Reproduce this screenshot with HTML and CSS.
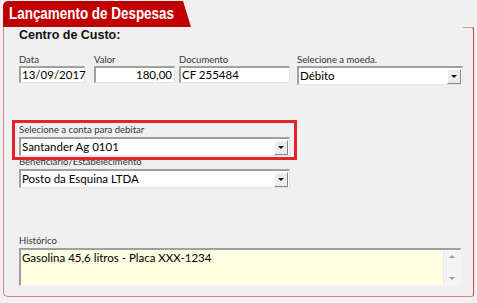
FILE: index.html
```html
<!DOCTYPE html>
<html lang="pt-BR">
<head>
  <meta charset="UTF-8" />
  <title>Lançamento de Despesas</title>
  <link rel="stylesheet" href="styles.css">
</head>
<body>
  <div class="tab"><span class="tab-title">Lançamento de Despesas</span></div>

  <div class="frame">
    <h2 class="section-title">Centro de Custo:</h2>

    <div class="row row-top">
      <div class="field f-data">
        <label>Data</label>
        <div class="input">13/09/2017</div>
      </div>
      <div class="field f-valor">
        <label>Valor</label>
        <div class="input num">180,00</div>
      </div>
      <div class="field f-doc">
        <label>Documento</label>
        <div class="input">CF 255484</div>
      </div>
      <div class="field f-moeda">
        <label>Selecione a moeda.</label>
        <div class="select">
          <span>Débito</span>
          <span class="drop"><i></i></span>
        </div>
      </div>
    </div>

    <div class="highlight">
      <div class="field">
        <label>Selecione a conta para debitar</label>
        <div class="select">
          <span>Santander Ag 0101</span>
          <span class="drop"><i></i></span>
        </div>
      </div>
    </div>

    <div class="field f-benef">
      <label>Beneficiário/Estabelecimento</label>
      <div class="select">
        <span>Posto da Esquina LTDA</span>
        <span class="drop"><i></i></span>
      </div>
    </div>

    <div class="field f-hist">
      <label>Histórico</label>
      <div class="memo">
        <span class="memo-text">Gasolina 45,6 litros - Placa XXX-1234</span>
        <span class="scroll">
          <i class="up"></i>
          <i class="down"></i>
        </span>
      </div>
    </div>
  </div>
</body>
</html>
```

FILE: styles.css
```css
body {
  margin: 0;
  background-color: #f0f0f0;
  font-family: Lato, "Noto Sans", sans-serif;
  color: #222;
  width: 477px;
  height: 303px;
  overflow: hidden;
}

.tab {
  margin: 1px 0 0 3px;
  width: 188px;
  height: 26px;
  box-sizing: border-box;
  padding: 2px 0 0 6px;
  background-color: #c00000;
  color: white;
  font-family: "Liberation Sans", Arial, sans-serif;
  font-weight: bold;
  font-size: 17px;
  line-height: 22px;
  border-top-left-radius: 5px;
  clip-path: polygon(0 0, 180px 0, 188px 100%, 0 100%);
  white-space: nowrap;
  overflow: hidden;
}

.tab-title {
  display: inline-block;
  transform: scaleX(0.79);
  transform-origin: left center;
}

.frame {
  position: relative;
  margin-left: 3px;
  width: 471px;
  height: 270px;
  box-sizing: border-box;
  border-left: 1px solid #e08080;
  border-right: 1px solid #c84848;
  border-bottom: 1px solid #e08080;
  border-bottom-left-radius: 5px;
  border-bottom-right-radius: 3px;
  padding: 0 0 0 15px;
}

.frame::before {
  content: "";
  position: absolute;
  top: 0;
  right: -1px;
  width: 10px;
  height: 4px;
  border-top: 1px solid #e89090;
  border-right: 1px solid #c84848;
  border-top-right-radius: 3px;
}

.section-title {
  margin: 0;
  padding-top: 1px;
  font-family: "Liberation Sans", Arial, sans-serif;
  font-size: 12.5px;
  font-weight: bold;
  color: #111;
  line-height: 14px;
}

.field label {
  display: block;
  font-size: 9.5px;
  color: #333;
  line-height: 13px;
  height: 13px;
  white-space: nowrap;
}

.row {
  display: flex;
}

.row-top {
  margin-top: 11px;
  gap: 4px;
}

.input,
.select,
.memo {
  box-sizing: border-box;
  background: white;
  border-top: 2px solid #a0a0a0;
  border-left: 2px solid #a0a0a0;
  border-right: 1px solid #e4e4e4;
  border-bottom: 1px solid #e4e4e4;
  font-size: 11.5px;
  color: #000;
  white-space: nowrap;
}

.input {
  height: 17px;
  line-height: 14px;
  padding: 0 2px 0 1px;
}

.input.num {
  text-align: right;
}

.f-data { width: 66px; }
.f-valor { width: 81px; margin-left: 5px; }
.f-doc { width: 111px; }
.f-moeda { width: 166px; margin-left: 3px; }

.select {
  height: 19px;
  display: flex;
  align-items: center;
  justify-content: space-between;
  padding-left: 1px;
  line-height: 16px;
}

.drop {
  width: 14px;
  height: 15px;
  margin-right: 1px;
  border-left: 1px solid #fff;
  border-top: 1px solid #fff;
  border-right: 1px solid #888;
  border-bottom: 1px solid #888;
  background: #ececec;
  box-sizing: border-box;
  display: flex;
  align-items: center;
  justify-content: center;
}

.drop i {
  width: 0;
  height: 0;
  border-left: 3px solid transparent;
  border-right: 3px solid transparent;
  border-top: 3px solid #111;
}

.highlight {
  margin: 35px 0 0 -7px;
  width: 285px;
  height: 40px;
  box-sizing: border-box;
  border: 3px solid #e8202a;
  padding: 0 0 0 4px;
  position: relative;
  z-index: 1;
  background: #f0f0f0;
}

.highlight .field {
  width: 271px;
}

.highlight .select {
  margin-top: 1px;
}

.f-benef {
  width: 271px;
  margin-top: -5px;
}

.f-benef .select {
  margin-top: 1px;
}

.f-hist {
  margin-top: 46px;
  width: 442px;
}

.memo {
  height: 38px;
  margin-top: 1px;
  background: #ffffe1;
  display: flex;
  justify-content: space-between;
  border-right-color: #f4f4f4;
  border-bottom-color: #f4f4f4;
}

.memo-text {
  padding-left: 1px;
  line-height: 15px;
}

.scroll {
  width: 16px;
  background: #f4f4f4;
  border-left: 1px solid #e8e8e8;
  display: flex;
  flex-direction: column;
  justify-content: space-between;
  align-items: center;
  padding: 5px 0;
}

.scroll i {
  width: 0;
  height: 0;
  border-left: 3px solid transparent;
  border-right: 3px solid transparent;
}

.scroll .up {
  border-bottom: 3px solid #999;
}

.scroll .down {
  border-top: 3px solid #999;
}
```
